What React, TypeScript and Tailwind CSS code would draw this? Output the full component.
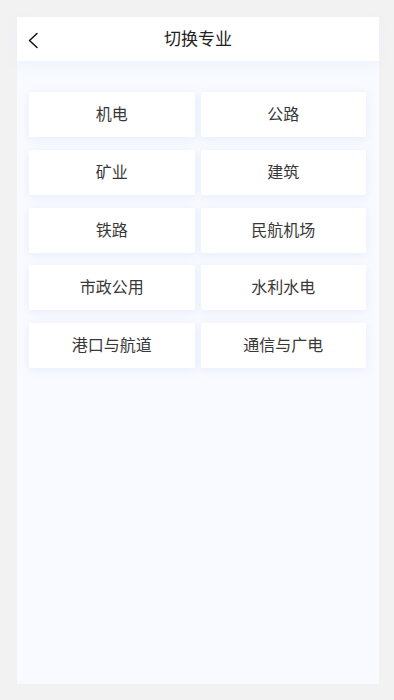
import React from 'react';

const majors = ['机电', '公路', '矿业', '建筑', '铁路', '民航机场', '市政公用', '水利水电', '港口与航道', '通信与广电'];

const font = { fontFamily: '"Noto Sans CJK SC", "Noto Sans", sans-serif' };

export default function App() {
  return (
    <div className="h-[700px] w-full bg-[#f2f2f2] pt-[17px] pb-[16px] pl-[17px] pr-[15px]" style={font}>
      <div className="flex h-full flex-col bg-[#f8faff]">
        {/* Header */}
        <div className="relative flex h-[44px] shrink-0 items-center justify-center bg-white pb-[4px] shadow-[0_4px_10px_rgba(230,236,248,0.6)]">
          <button className="absolute left-[9px] top-[14px] flex h-[18px] w-[14px] items-center justify-center">
            <svg width="12" height="17" viewBox="0 0 12 17" fill="none">
              <path d="M10 1.5L2.5 8.5L10 15.5" stroke="#111" strokeWidth="1.5" strokeLinecap="round" strokeLinejoin="round" />
            </svg>
          </button>
          <h1 className="text-[17px] leading-none text-[#222]">切换专业</h1>
        </div>

        {/* Grid */}
        <div className="grid grid-cols-2 gap-x-[6px] gap-y-[12.75px] pl-[12px] pr-[13px] pt-[31px]">
          {majors.map((m) => (
            <div
              key={m}
              className="flex h-[45px] items-center justify-center rounded-[2px] bg-white pb-[3px] text-[16px] leading-none text-[#383838] shadow-[0_2px_8px_rgba(200,215,240,0.35)]"
            >
              {m}
            </div>
          ))}
        </div>
      </div>
    </div>
  );
}
